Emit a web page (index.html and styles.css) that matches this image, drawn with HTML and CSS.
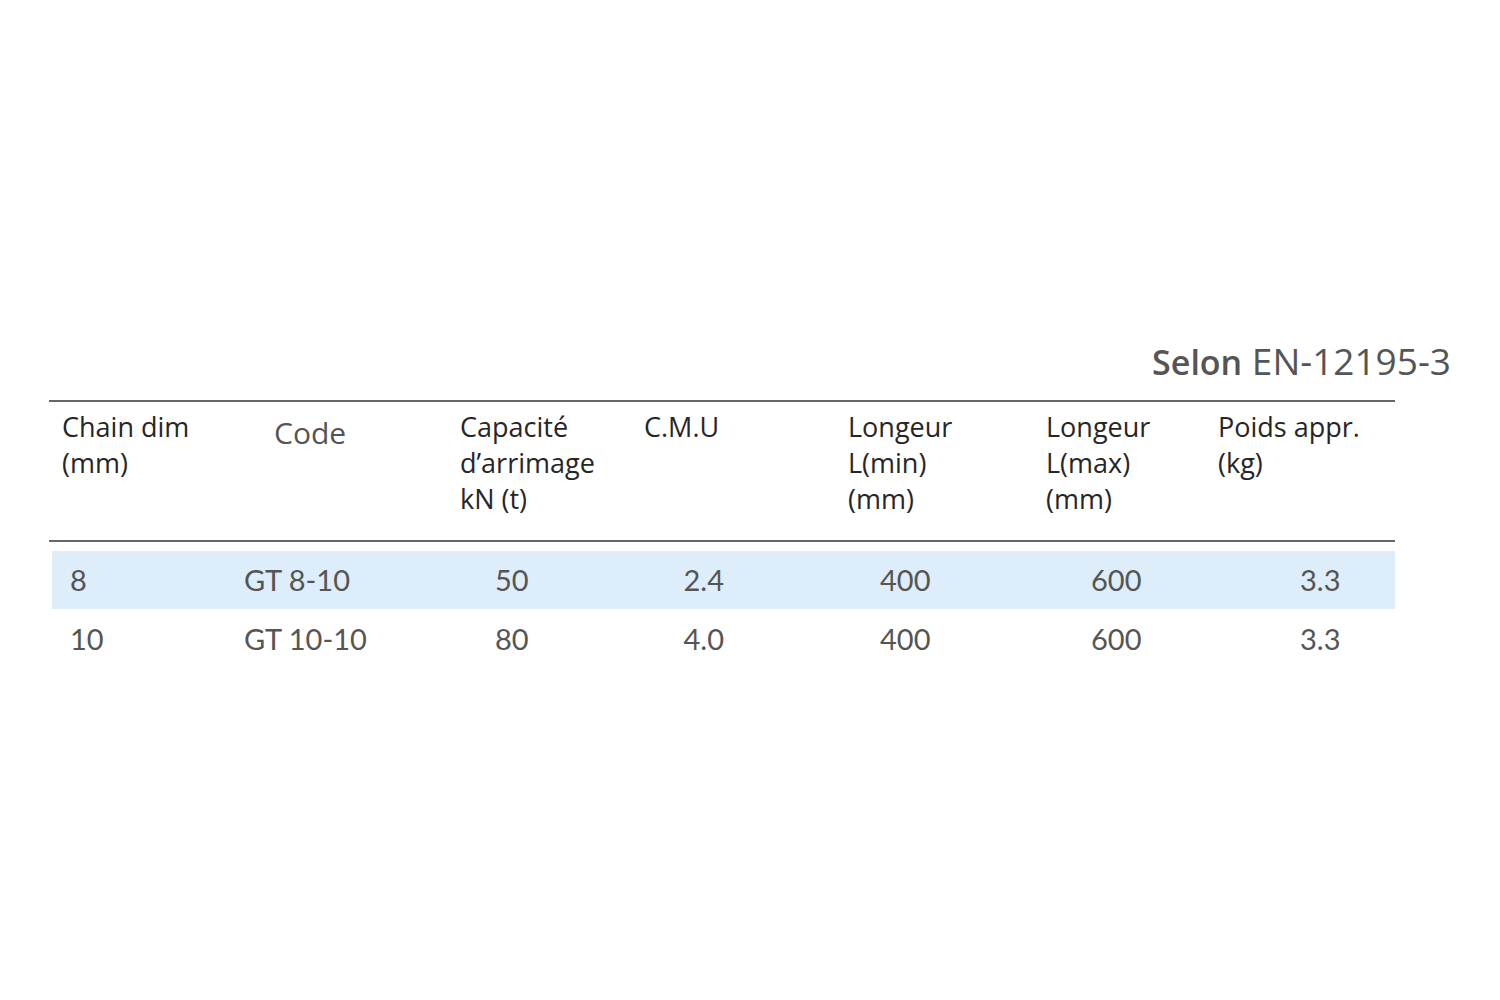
FILE: index.html
```html
<!DOCTYPE html>
<html lang="fr">
<head>
<meta charset="utf-8">
<title>Selon EN-12195-3</title>
<link rel="stylesheet" href="styles.css">
</head>
<body>
<div class="page">
  <div class="norm"><span class="norm-b">Selon</span> EN-12195-3</div>
  <div class="table">
    <div class="row head">
      <div class="c c1">Chain dim<br>(mm)</div>
      <div class="c c2 code">Code</div>
      <div class="c c3">Capacité<br>d’arrimage<br>kN (t)</div>
      <div class="c c4">C.M.U</div>
      <div class="c c5">Longeur<br>L(min)<br>(mm)</div>
      <div class="c c6">Longeur<br>L(max)<br>(mm)</div>
      <div class="c c7">Poids appr.<br>(kg)</div>
    </div>
    <div class="row data hl">
      <div class="c c1">8</div>
      <div class="c c2">GT 8-10</div>
      <div class="c c3">50</div>
      <div class="c c4">2.4</div>
      <div class="c c5">400</div>
      <div class="c c6">600</div>
      <div class="c c7">3.3</div>
    </div>
    <div class="row data">
      <div class="c c1">10</div>
      <div class="c c2">GT 10-10</div>
      <div class="c c3">80</div>
      <div class="c c4">4.0</div>
      <div class="c c5">400</div>
      <div class="c c6">600</div>
      <div class="c c7">3.3</div>
    </div>
  </div>
</div>
</body>
</html>
```

FILE: styles.css
```css
html, body {
  margin: 0;
  padding: 0;
  background: #ffffff;
}
.page {
  width: 1500px;
  height: 1000px;
  box-sizing: border-box;
  padding: 336px 0 0 49px;
}
.norm {
  width: 1402px;
  text-align: right;
  font-family: "Open Sans", "DejaVu Sans", sans-serif;
  font-size: 37px;
  line-height: 50px;
  color: #555555;
  height: 64px;
}
.norm-b {
  font-weight: 600;
  font-size: 34px;
}
.table {
  width: 1346px;
  border-top: 2px solid #666666;
}
.row {
  display: grid;
  grid-template-columns: 181px 216px 184px 204px 198px 172px 191px;
}
.head {
  border-bottom: 2px solid #666666;
  height: 138px;
  box-sizing: content-box;
  font-family: "Open Sans", "DejaVu Sans", sans-serif;
  font-size: 27px;
  line-height: 36px;
  color: #262626;
}
.head .c {
  padding-top: 7px;
  padding-left: 14px;
  white-space: nowrap;
}
.head .c1 { padding-left: 13px; }
.head .code {
  padding-left: 44px;
  padding-top: 13px;
  font-size: 30px;
  color: #555555;
}
.data {
  font-family: "Lato", "Noto Sans", sans-serif;
  font-size: 29px;
  color: #555555;
  height: 58px;
  line-height: 58px;
  margin-left: 3px;
}
.data .c1 { padding-left: 18px; }
.data .c2 { padding-left: 11px; }
.data .c3 { padding-left: 46px; }
.data .c4 { text-align: right; padding-right: 113px; }
.data .c5 { padding-left: 43px; }
.data .c6 { padding-left: 56px; }
.data .c7 { padding-left: 93px; }
.hl {
  margin-top: 9px;
  background: #ddedf9;
}
.data:not(.hl) { margin-top: 1px; }
```
